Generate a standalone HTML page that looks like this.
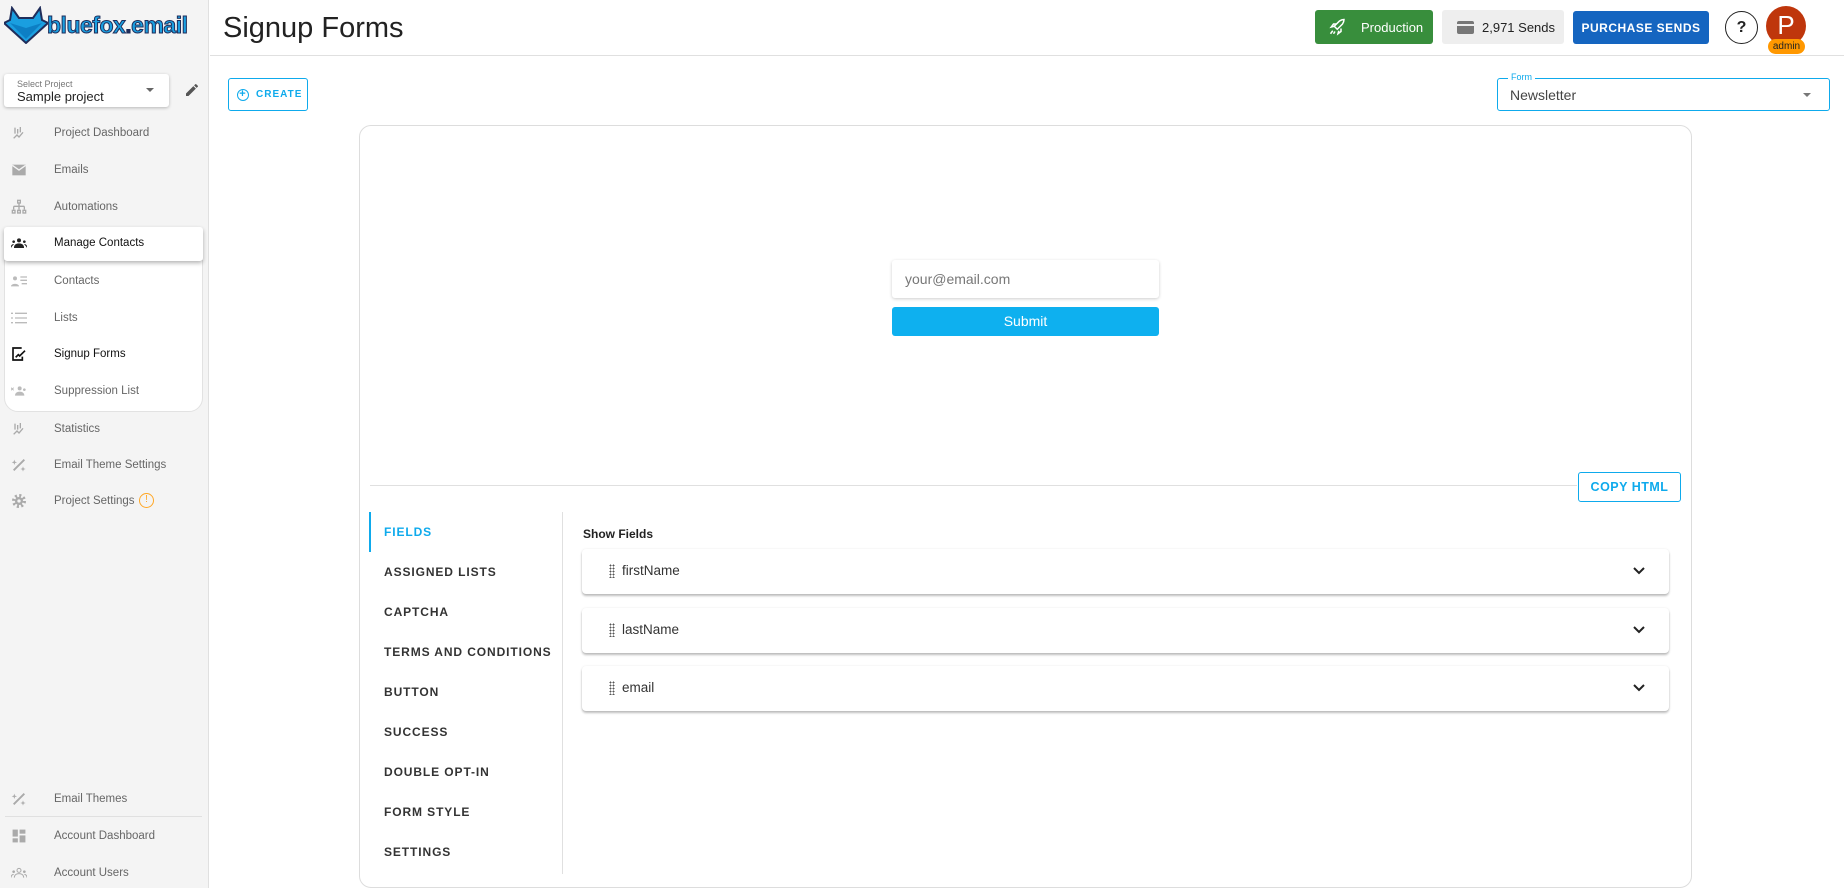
<!DOCTYPE html>
<html style="height:888px;overflow:hidden"><head><meta charset="utf-8"><style>
*{box-sizing:border-box;margin:0;padding:0}
body{width:1844px;height:888px;overflow:hidden;font-family:"Liberation Sans",Arial,sans-serif;background:#fff;position:relative;color:#222}
.abs{position:absolute}
#side{left:0;top:0;width:209px;height:888px;background:#f4f4f4;border-right:1px solid #e0e0e0}
.nav{position:absolute;left:0;width:209px;height:30px;display:flex;align-items:center;font-size:11.5px;color:#666}
.nav .ic{position:absolute;left:11px;width:16px;height:16px;display:flex;align-items:center;justify-content:center}
.nav span.t{position:absolute;left:54px}
.tab{position:absolute;left:384px;font-size:12px;font-weight:bold;letter-spacing:.9px;color:#333}
.field{position:absolute;left:582px;width:1087px;height:45px;background:#fff;border-radius:4px;box-shadow:0 2px 2px rgba(0,0,0,.25),0 0 2px rgba(0,0,0,.08)}
.field .d{position:absolute;left:27px;top:15px;width:6px;height:14px;background-image:radial-gradient(circle,#555 0.8px,transparent 1px);background-size:3px 3px}
.field .n{position:absolute;left:40px;top:14px;font-size:13.5px;color:#333}
.field svg{position:absolute;right:24px;top:18px}
</style></head><body>
<div id="side" class="abs">
 <svg class="abs" style="left:4px;top:6px" width="44" height="38" viewBox="0 0 44 38"><path d="M8 2 L15 12 L29 12 L36 2 L38 14 L44 17 L22 37 L0 17 L6 14Z" fill="#1a9fe0" stroke="#1f2d5a" stroke-width="2"/><path d="M6 17 L22 22 L38 17 L22 33Z" fill="#0d7fc4"/></svg>
 <div class="abs" style="left:47px;top:12px;font-size:23px;font-weight:bold;color:#1a9fe0;letter-spacing:-0.5px;-webkit-text-stroke:1px #1f2d5a">bluefox<span style="color:#1f2d5a">.</span>email</div>
 <div class="abs" style="left:4px;top:74px;width:165px;height:33px;background:#fff;border-radius:3px;box-shadow:0 1px 3px rgba(0,0,0,.25)">
  <div class="abs" style="left:13px;top:5px;font-size:9px;color:#777">Select Project</div>
  <div class="abs" style="left:13px;top:15px;font-size:13px;color:#222">Sample project</div>
  <div class="abs" style="left:142px;top:14px;border-left:4px solid transparent;border-right:4px solid transparent;border-top:4px solid #666"></div>
 </div>
 <svg class="abs" style="left:184px;top:82px" width="16" height="16" viewBox="0 0 24 24"><path d="M3 17.25V21h3.75L17.8 9.94l-3.75-3.75L3 17.25zM20.7 7.04a1 1 0 000-1.41l-2.34-2.34a1 1 0 00-1.41 0l-1.83 1.83 3.750 3.75 1.83-1.83z" fill="#555"/></svg>

 <div class="nav" style="top:118px"><div class="ic"><svg width="16" height="16" viewBox="0 0 24 24"><path d="M4 20l5-5 3 3 6-7M6 4v9M10 6v7M14 3v8" stroke="#aaa" stroke-width="2" fill="none"/></svg></div><span class="t">Project Dashboard</span></div>
 <div class="nav" style="top:155px"><div class="ic"><svg width="16" height="14" viewBox="0 0 24 20"><path d="M2 2h20v16H2z" fill="#aaa"/><path d="M2 3l10 7 10-7" stroke="#f4f4f4" stroke-width="2" fill="none"/></svg></div><span class="t">Emails</span></div>
 <div class="nav" style="top:192px"><div class="ic"><svg width="16" height="16" viewBox="0 0 24 24" fill="none" stroke="#aaa" stroke-width="2"><rect x="10" y="2" width="4" height="4"/><path d="M12 6v5M4 11h16M4 11v5M12 11v5M20 11v5"/><rect x="2" y="17" width="4" height="4"/><rect x="10" y="17" width="4" height="4"/><rect x="18" y="17" width="4" height="4"/></svg></div><span class="t">Automations</span></div>
 <div class="abs" style="left:4px;top:260px;width:199px;height:152px;background:#fff;border:1px solid #e2e2e2;border-radius:0 0 14px 14px"></div>
 <div class="abs" style="left:4px;top:227px;width:199px;height:34px;background:#fff;border-radius:3px;box-shadow:0 2px 4px rgba(0,0,0,.3)"></div>
 <div class="nav" style="top:228px;color:#111"><div class="ic"><svg width="18" height="12" viewBox="0 0 24 16"><circle cx="12" cy="4" r="3" fill="#222"/><circle cx="4" cy="6" r="2" fill="#222"/><circle cx="20" cy="6" r="2" fill="#222"/><path d="M5 15c0-4 3-6 7-6s7 2 7 6zM0 15c0-3 2-5 4-5M24 15c0-3-2-5-4-5" fill="#222" stroke="#222"/></svg></div><span class="t">Manage Contacts</span></div>
 <div class="nav" style="top:266px"><div class="ic"><svg width="16" height="14" viewBox="0 0 24 20"><circle cx="6" cy="6" r="3" fill="#bbb"/><path d="M0 18c0-5 12-5 12 0z" fill="#bbb"/><path d="M14 4h10M14 9h10M16 14h8" stroke="#bbb" stroke-width="2"/></svg></div><span class="t">Contacts</span></div>
 <div class="nav" style="top:303px"><div class="ic"><svg width="16" height="14" viewBox="0 0 24 20" stroke="#bbb" stroke-width="2"><path d="M0 3h3M6 3h18M0 10h3M6 10h18M0 17h3M6 17h18"/></svg></div><span class="t">Lists</span></div>
 <div class="nav" style="top:339px;color:#111"><div class="ic"><svg width="16" height="16" viewBox="0 0 24 24" fill="none" stroke="#111" stroke-width="2.5"><path d="M16 3H3v18h14v-5"/><path d="M7 17l4-4 2 2 8-8"/></svg></div><span class="t">Signup Forms</span></div>
 <div class="nav" style="top:376px"><div class="ic"><svg width="18" height="12" viewBox="0 0 24 16"><circle cx="13" cy="4" r="3" fill="#bbb"/><circle cx="20" cy="6" r="2" fill="#bbb"/><path d="M6 15c0-4 3-6 7-6s7 2 7 6z" fill="#bbb"/><path d="M0 3l4 4M4 3l-4 4" stroke="#bbb" stroke-width="1.5"/></svg></div><span class="t">Suppression List</span></div>
 <div class="nav" style="top:414px"><div class="ic"><svg width="16" height="16" viewBox="0 0 24 24"><path d="M4 20l5-5 3 3 6-7M6 4v9M10 6v7M14 3v8" stroke="#aaa" stroke-width="2" fill="none"/></svg></div><span class="t">Statistics</span></div>
 <div class="nav" style="top:450px"><div class="ic"><svg width="16" height="16" viewBox="0 0 24 24"><path d="M3 19L19 3l2 2L5 21z" fill="#aaa"/><path d="M5 4l1 3 3 1-3 1-1 3-1-3-3-1 3-1zM18 14l1 3 3 1-3 1-1 3-1-3-3-1 3-1z" fill="#aaa"/></svg></div><span class="t">Email Theme Settings</span></div>
 <div class="nav" style="top:486px"><div class="ic"><svg width="16" height="16" viewBox="0 0 24 24"><circle cx="12" cy="12" r="8" fill="none" stroke="#aaa" stroke-width="5" stroke-dasharray="3 3.3"/><circle cx="12" cy="12" r="6" fill="#aaa"/><circle cx="12" cy="12" r="2.5" fill="#f4f4f4"/></svg></div><span class="t">Project Settings</span>
  <div class="abs" style="left:139px;top:7px;width:15px;height:15px;border:1.5px solid #ffa726;border-radius:50%;color:#ffa726;font-size:10px;text-align:center;line-height:12px">!</div></div>
 <div class="nav" style="top:784px"><div class="ic"><svg width="16" height="16" viewBox="0 0 24 24"><path d="M3 19L19 3l2 2L5 21z" fill="#aaa"/><path d="M5 4l1 3 3 1-3 1-1 3-1-3-3-1 3-1zM18 14l1 3 3 1-3 1-1 3-1-3-3-1 3-1z" fill="#aaa"/></svg></div><span class="t">Email Themes</span></div>
 <div class="abs" style="left:5px;top:816px;width:197px;height:1px;background:#e0e0e0"></div>
 <div class="nav" style="top:821px"><div class="ic"><svg width="14" height="14" viewBox="0 0 24 24" fill="#aaa"><rect x="1" y="1" width="9" height="12"/><rect x="13" y="1" width="10" height="7"/><rect x="1" y="16" width="9" height="7"/><rect x="13" y="11" width="10" height="12"/></svg></div><span class="t">Account Dashboard</span></div>
 <div class="nav" style="top:858px"><div class="ic"><svg width="18" height="12" viewBox="0 0 24 16"><circle cx="12" cy="4" r="3" fill="none" stroke="#aaa" stroke-width="1.5"/><circle cx="4" cy="6" r="2" fill="#aaa"/><circle cx="20" cy="6" r="2" fill="#aaa"/><path d="M5 15c0-4 3-6 7-6s7 2 7 6M0 15c0-3 2-5 4-5M24 15c0-3-2-5-4-5" fill="none" stroke="#aaa" stroke-width="1.5"/></svg></div><span class="t">Account Users</span></div>
</div>

<div class="abs" style="left:210px;top:0;width:1634px;height:56px;border-bottom:1px solid #e0e0e0"></div>
<div class="abs" style="left:223px;top:12px;font-size:29px;color:#222">Signup Forms</div>
<div class="abs" style="left:1315px;top:10px;width:118px;height:34px;background:#388e3c;border-radius:3px;color:#fff;font-size:13px;display:flex;align-items:center">
 <svg style="margin-left:14px" width="18" height="18" viewBox="0 0 24 24" fill="none" stroke="#fff" stroke-width="2"><path d="M14 4c3-2 6-2 6-2s0 3-2 6l-7 7-4-4zM7 11l-4 1 3-4h4M13 17l-1 4 4-3v-4M5 17l-3 4M8 18l-2 3"/></svg>
 <span style="margin-left:14px">Production</span></div>
<div class="abs" style="left:1442px;top:10px;width:122px;height:34px;background:#eee;border-radius:3px;color:#222;font-size:13px;display:flex;align-items:center">
 <div style="margin-left:15px;width:17px;height:13px;background:#777;border-radius:2px;position:relative"><div style="position:absolute;left:0;top:3px;width:17px;height:2px;background:#eee"></div></div>
 <span style="margin-left:8px">2,971 Sends</span></div>
<div class="abs" style="left:1573px;top:11px;width:136px;height:33px;background:#1565c0;border-radius:3px;color:#fff;font-size:12px;font-weight:bold;display:flex;align-items:center;justify-content:center;letter-spacing:.5px">PURCHASE SENDS</div>
<div class="abs" style="left:1725px;top:11px;width:33px;height:33px;border:1.2px solid #222;border-radius:50%;font-size:16px;text-align:center;line-height:31px;font-weight:bold">?</div>
<div class="abs" style="left:1766px;top:6px;width:40px;height:40px;background:#bf360c;border-radius:50%;color:#fff;font-size:26px;text-align:center;line-height:38px">P</div>
<div class="abs" style="left:1768px;top:39px;width:37px;height:15px;background:#ff9800;border-radius:8px;font-size:10px;text-align:center;line-height:15px;color:#222">admin</div>

<div class="abs" style="left:228px;top:78px;width:80px;height:33px;border:1px solid #0eaaec;border-radius:3px;color:#0eaaec;font-size:10px;font-weight:bold;letter-spacing:1px;display:flex;align-items:center">
 <div style="margin-left:8px;width:12px;height:12px;border:1.3px solid #0eaaec;border-radius:50%;font-size:11px;line-height:9px;text-align:center">+</div><span style="margin-left:7px">CREATE</span></div>
<div class="abs" style="left:1497px;top:78px;width:333px;height:33px;border:1px solid #0eaaec;border-radius:3px">
 <div class="abs" style="left:10px;top:-7px;background:#fff;padding:0 3px;font-size:9px;color:#0eaaec">Form</div>
 <div class="abs" style="left:12px;top:8px;font-size:14px;color:#444">Newsletter</div>
 <div class="abs" style="left:305px;top:14px;border-left:4px solid transparent;border-right:4px solid transparent;border-top:4px solid #777"></div>
</div>

<div class="abs" style="left:359px;top:125px;width:1333px;height:763px;border:1px solid #ddd;border-radius:12px"></div>
<div class="abs" style="left:892px;top:260px;width:267px;height:38px;background:#fff;border-radius:3px;box-shadow:0 1px 3px rgba(0,0,0,.2);font-size:14px;color:#777;padding:11px 0 0 13px">your@email.com</div>
<div class="abs" style="left:892px;top:307px;width:267px;height:29px;background:#0eb0ef;border-radius:3px;color:#fff;font-size:14px;text-align:center;line-height:29px">Submit</div>
<div class="abs" style="left:370px;top:485px;width:1207px;height:1px;background:#e0e0e0"></div>
<div class="abs" style="left:1578px;top:472px;width:103px;height:30px;border:1px solid #0eaaec;border-radius:3px;color:#0eaaec;font-size:12.5px;font-weight:bold;letter-spacing:.5px;text-align:center;line-height:28px">COPY HTML</div>

<div class="abs" style="left:369px;top:512px;width:2px;height:40px;background:#0eaaec"></div>
<div class="abs" style="left:562px;top:512px;width:1px;height:362px;background:#e0e0e0"></div>
<div class="tab" style="top:525px;color:#0eaaec">FIELDS</div>
<div class="tab" style="top:565px">ASSIGNED LISTS</div>
<div class="tab" style="top:605px">CAPTCHA</div>
<div class="tab" style="top:645px">TERMS AND CONDITIONS</div>
<div class="tab" style="top:685px">BUTTON</div>
<div class="tab" style="top:725px">SUCCESS</div>
<div class="tab" style="top:765px">DOUBLE OPT-IN</div>
<div class="tab" style="top:805px">FORM STYLE</div>
<div class="tab" style="top:845px">SETTINGS</div>

<div class="abs" style="left:583px;top:527px;font-size:12px;font-weight:bold;color:#222">Show Fields</div>
<div class="field" style="top:549px"><div class="d"></div><div class="n">firstName</div><svg width="12" height="8" viewBox="0 0 12 8"><path d="M1 1l5 5 5-5" stroke="#222" stroke-width="2" fill="none"/></svg></div>
<div class="field" style="top:608px"><div class="d"></div><div class="n">lastName</div><svg width="12" height="8" viewBox="0 0 12 8"><path d="M1 1l5 5 5-5" stroke="#222" stroke-width="2" fill="none"/></svg></div>
<div class="field" style="top:666px"><div class="d"></div><div class="n">email</div><svg width="12" height="8" viewBox="0 0 12 8"><path d="M1 1l5 5 5-5" stroke="#222" stroke-width="2" fill="none"/></svg></div>
</body></html>
